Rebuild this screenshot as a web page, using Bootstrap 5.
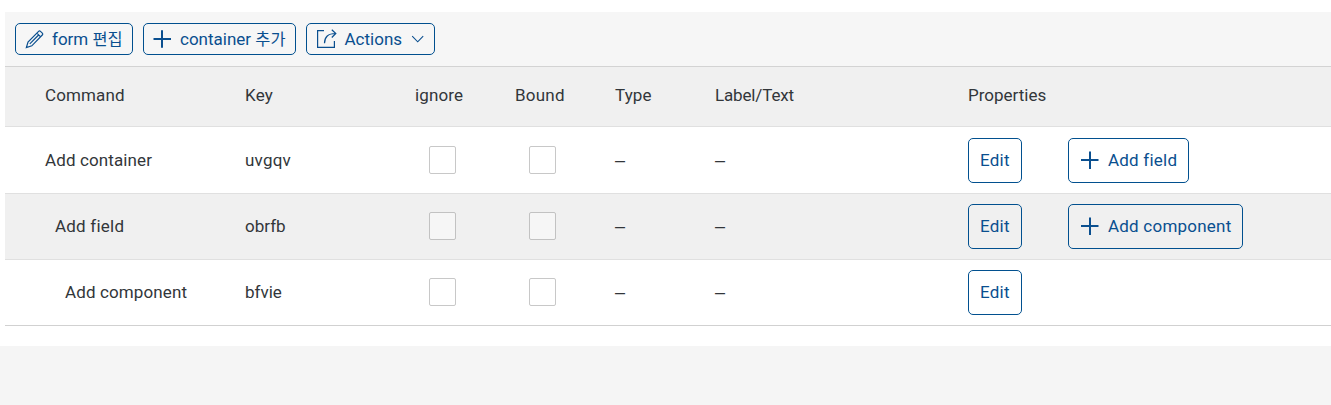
<!DOCTYPE html>
<html lang="ko">
<head>
<meta charset="utf-8">
<meta name="viewport" content="width=device-width, initial-scale=1">
<title>Form editor</title>
<link href="https://cdn.jsdelivr.net/npm/bootstrap@5.3.0/dist/css/bootstrap.min.css" rel="stylesheet">
<style>
  body { font-family: "Roboto", "Noto Sans CJK KR", sans-serif; font-size: 17px; line-height: 24px; color: #32363a; background: #f5f5f5; height: 405px; overflow: hidden; }
  .form-panel { height: 346px; padding: 12px 0 0 5px; }
  .tool-strip { height: 55px; padding: 11px 10px 0; column-gap: 10px; background: #f6f6f6; border-bottom: 1px solid #d3d3d3; }
  .btn-form { --bs-btn-color: #0a4f8f; --bs-btn-border-color: #01508f; --bs-btn-border-radius: 5px; --bs-btn-font-size: 17px; --bs-btn-line-height: 24px; --bs-btn-padding-x: 0; --bs-btn-padding-y: 0; --bs-btn-hover-bg: #e8f2fb; --bs-btn-hover-color: #0a4f8f; white-space: nowrap; }
  .tool-strip .btn-form { height: 32px; padding: 0 9px; }
  .w-edit { width: 118px; } .w-container { width: 153px; } .w-actions { width: 129px; }
  .ko { font-size: 16.4px; letter-spacing: 0; }
  .cmd-table .btn-form { height: 45px; padding: 0 11px; }
  .w-props { width: 54px; } .w-field { width: 121px; } .w-component { width: 175px; }
  .cmd-table { table-layout: fixed; border-collapse: separate; border-spacing: 0; width: 1326px; --bs-table-color: #32363a; }
  .cmd-table > :not(caption) > * > * { padding: 0; border-bottom: 1px solid #e0e0e0; font-weight: 400; height: 66px; background: #fff; box-shadow: none; }
  .cmd-table > thead > tr > th { height: 60px; padding-bottom: 4px; background: #f0f0f0; vertical-align: middle; }
  .cmd-table > tbody > tr.first-line > td { height: 67px; }
  .cmd-table > tbody > tr.alt-line > td { background: #f0f0f0; }
  .cmd-table > tbody > tr:last-child > td { border-color: #d1d1d1; }
  .tick { display: block; width: 27px; height: 28px; margin: 0 0 0 14px; border: 1px solid #c8c8c8; border-radius: 2px; background: #fff; appearance: none; }
  .alt-line .tick { background: #f6f6f6; border-color: #c2c2c2; }
  .cmd-table > tbody > tr:not(.first-line) .tick { margin-bottom: 1px; }
  .cmd-table > tbody > tr:not(.first-line) .t { padding-bottom: 1px; }
  .level-1 { padding-left: 10px; } .level-2 { padding-left: 20px; }
  .t { display: block; white-space: nowrap; }
  .sp-1 { letter-spacing: .12px; } .sp-2 { letter-spacing: .22px; } .sp-n { letter-spacing: -.15px; }
  .dash { font-family: "Liberation Sans", sans-serif; font-size: 18px; }
  svg { flex: none; fill: none; stroke: currentColor; }
</style>
</head>
<body>
<main class="form-panel bg-white">
  <div class="tool-strip d-flex">
    <button class="btn btn-form w-edit d-flex align-items-center" type="button">
      <svg width="20" height="20" viewBox="0 0 20 20" stroke-width="1.2"><path d="M1.4 18.5 3 13.1 13.6 2.4Q14.5 1.5 15.5 2.4L17.3 4.2Q18.2 5.1 17.3 6L6.8 16.8ZM11.9 4.1l3.7 3.7M13.6 6 4.8 14.8"/></svg>
      <span class="t" style="margin-left:7px">form <span class="ko">편집</span></span>
    </button>
    <button class="btn btn-form w-container d-flex align-items-center gap-2" type="button">
      <svg width="19" height="20" viewBox="0 0 19 20" stroke-width="2"><path d="M.5 10h17.5M9 1.2v17.5"/></svg>
      <span class="t">container <span class="ko">추가</span></span>
    </button>
    <button class="btn btn-form w-actions d-flex align-items-center" type="button">
      <svg width="21" height="20" viewBox="0 0 21 20" stroke-width="1.2"><path d="M8 1.6H1.6v16.8h16.8V12M8.5 14.3Q8.5 4.5 19.5 4.5M15.8.7l4 3.8-4 4"/></svg>
      <span class="t" style="margin-left:7.5px">Actions</span>
      <svg class="ms-auto" width="14" height="10" viewBox="0 0 14 10" stroke-width="1.1"><path d="m1.2 2.2 5.5 5.6 5.5-5.6"/></svg>
    </button>
  </div>
  <table class="table cmd-table align-middle mb-0">
    <colgroup><col style="width:40px"><col style="width:200px"><col style="width:170px"><col style="width:100px"><col style="width:100px"><col style="width:100px"><col style="width:253px"><col style="width:100px"><col></colgroup>
    <thead>
      <tr><th></th><th><span class="t sp-1">Command</span></th><th><span class="t sp-2">Key</span></th><th><span class="t sp-1">ignore</span></th><th><span class="t sp-2">Bound</span></th><th><span class="t sp-1">Type</span></th><th><span class="t sp-n">Label/Text</span></th><th><span class="t">Properties</span></th><th></th></tr>
    </thead>
    <tbody>
      <tr class="first-line"><td></td><td><span class="t sp-1">Add container</span></td><td><span class="t sp-2">uvgqv</span></td>
        <td><input class="tick" type="checkbox" aria-label="ignore"></td><td><input class="tick" type="checkbox" aria-label="Bound"></td><td><span class="t dash">–</span></td><td><span class="t dash">–</span></td>
        <td><button class="btn btn-form w-props d-flex align-items-center" type="button"><span class="t sp-2">Edit</span></button></td>
        <td><button class="btn btn-form w-field d-flex align-items-center gap-2" type="button"><svg width="20" height="19" viewBox="0 0 20 19" stroke-width="2"><path d="M1 9h17.5M10 .5v17.5"/></svg><span class="t sp-2">Add field</span></button></td></tr>
      <tr class="alt-line"><td></td><td><span class="level-1 t sp-2">Add field</span></td><td><span class="t">obrfb</span></td>
        <td><input class="tick" type="checkbox" aria-label="ignore"></td><td><input class="tick" type="checkbox" aria-label="Bound"></td><td><span class="t dash">–</span></td><td><span class="t dash">–</span></td>
        <td><button class="btn btn-form w-props d-flex align-items-center" type="button"><span class="t sp-2">Edit</span></button></td>
        <td><button class="btn btn-form w-component d-flex align-items-center gap-2" type="button"><svg width="20" height="19" viewBox="0 0 20 19" stroke-width="2"><path d="M1 9h17.5M10 .5v17.5"/></svg><span class="t sp-2">Add component</span></button></td></tr>
      <tr><td></td><td><span class="level-2 t sp-1">Add component</span></td><td><span class="t">bfvie</span></td>
        <td><input class="tick" type="checkbox" aria-label="ignore"></td><td><input class="tick" type="checkbox" aria-label="Bound"></td><td><span class="t dash">–</span></td><td><span class="t dash">–</span></td>
        <td><button class="btn btn-form w-props d-flex align-items-center" type="button"><span class="t sp-2">Edit</span></button></td><td></td></tr>
    </tbody>
  </table>
</main>
<script src="https://cdn.jsdelivr.net/npm/bootstrap@5.3.0/dist/js/bootstrap.bundle.min.js"></script>
</body>
</html>
